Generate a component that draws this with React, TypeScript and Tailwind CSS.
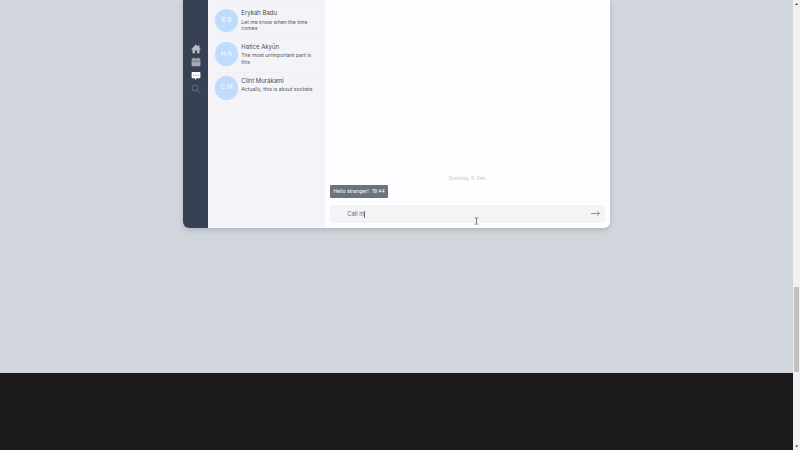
import React from "react";

type Contact = { initials: string; name: string; lines: string[] };

const contacts: Contact[] = [
  { initials: "E B", name: "Erykah Badu", lines: ["Let me know when the time", "comes"] },
  { initials: "H A", name: "Hatice Akyün", lines: ["The most unimportant part is", "this"] },
  { initials: "C M", name: "Clint Murakami", lines: ["Actually, this is about sockets"] },
];

function HomeIcon() {
  return (
    <svg viewBox="0 0 10 10" className="size-2.5 fill-[#b9bcc5]">
      <path d="M5 .6 .3 5l.7.7.5-.4v4h2.5V6.4h2v2.9h2.5v-4l.5.4.7-.7-1.3-1.2V1.3H7v1.1z" />
    </svg>
  );
}

function CalendarIcon() {
  return (
    <svg viewBox="0 0 10 10" className="size-2.5">
      <path fill="#a7abb5" d="M2 .8h1.2v.8h3.6V.8H8v.8h.5q.9 0 .9.9v1.2H.6V2.5q0-.9.9-.9H2zM.6 4.2h8.8v4.2q0 .9-.9.9h-7q-.9 0-.9-.9z" />
      <path fill="#777d8b" d="M2.2 5.2h1V6h-1zM4.5 5.2h1V6h-1zM6.8 5.2h1V6h-1z" />
    </svg>
  );
}

function ChatIcon() {
  return (
    <svg viewBox="0 0 10 10" className="size-2.5">
      <path fill="#fff" d="M1.4 1h7.2q.8 0 .8.8v4.6q0 .8-.8.8H5.7L4 9.1V7.2H1.4q-.8 0-.8-.8V1.8q0-.8.8-.8" />
      <path fill="#626979" d="M2.2 3.7h1v1h-1zM4.5 3.7h1v1h-1zM6.8 3.7h1v1h-1z" />
    </svg>
  );
}

function SearchIcon() {
  return (
    <svg viewBox="0 0 10 10" className="size-2.5 fill-none stroke-[#7d828f]" strokeWidth="0.7">
      <circle cx="4.1" cy="4" r="3" />
      <path d="m6.3 6.2 3 3" />
    </svg>
  );
}

function ContactRow({ initials, name, lines }: Contact) {
  return (
    <div className="flex h-[33.7px] gap-[3px] border-t border-[#efeef3] pt-[3px]">
      <div className="flex size-[23.5px] shrink-0 items-center justify-center rounded-full bg-[#bfdbfe] pt-px text-[6.5px] font-medium text-[#f4f8ff]">
        {initials}
      </div>
      <div className="whitespace-nowrap pt-[0.5px]">
        <div className="text-[6px] leading-[8px] text-[#4b4b51]">{name}</div>
        <div className="pt-[1.5px] text-[5.1px] leading-[6.6px] text-[#58585e]">
          {lines.map((line) => (
            <div key={line}>{line}</div>
          ))}
        </div>
      </div>
    </div>
  );
}

function Scrollbar() {
  return (
    <div className="flex w-[7px] shrink-0 flex-col items-center bg-[#f1f1f1]">
      <svg viewBox="0 0 7 7" className="size-[7px] shrink-0">
        <path fill="#555" d="M2 5h3.4L3.7 3z" />
      </svg>
      <div className="mt-[280px] h-[85px] w-[5px] bg-[#c1c1c1]" />
      <div className="grow" />
      <svg viewBox="0 0 7 7" className="size-[7px] shrink-0">
        <path fill="#555" d="M2 2.5h3.4L3.7 4.5z" />
      </svg>
    </div>
  );
}

export default function App() {
  return (
    <div className="relative flex h-[450px] w-[800px] overflow-hidden bg-[#1b191c] font-['Inter',sans-serif]">
      <div className="flex grow flex-col">
        <main className="h-[373px] bg-[#d1d5dc] pl-[183.3px]">
          <div className="flex h-[228px] w-[426.7px] overflow-hidden rounded-b-[6px] bg-[#fefdff] shadow-[0_2px_5px_rgba(60,65,80,0.22)]">
            <nav className="flex w-[25px] shrink-0 flex-col items-center gap-[3.4px] bg-[#374054] pt-[44px]">
              <HomeIcon />
              <CalendarIcon />
              <ChatIcon />
              <SearchIcon />
            </nav>
            <aside className="w-[117px] shrink-0 bg-[#f4f3f8] pl-[6.5px] pr-[2px] pt-[4.7px]">
              {contacts.map((contact) => (
                <ContactRow key={contact.name} {...contact} />
              ))}
            </aside>
            <section className="flex grow flex-col px-[5px] pb-[5px]">
              <div className="mt-[174px] text-center text-[5px] leading-[8px] text-[#c9c9ce]">Sonntag, 6. Feb.</div>
              <div className="mt-[2.5px] flex h-[13.5px] w-[58px] items-center gap-[3px] whitespace-nowrap rounded-[1px] bg-[#6b7280] pl-[3px] pt-px text-[5.1px] text-white">
                <span>Hello stranger!</span>
                <span>19:44</span>
              </div>
              <div className="mt-[7px] flex h-[18px] items-center justify-between rounded-[3px] bg-[#f4f3f6] pl-[17px] pr-[5px]">
                <div className="flex items-center text-[5.8px] text-[#68686e]">
                  <span>Call m</span>
                  <span className="h-[7px] w-[0.7px] bg-[#77777c]" />
                </div>
                <svg viewBox="0 0 9 7" className="mb-px h-[7px] w-[9px] fill-none stroke-[#77777b]" strokeWidth="0.8">
                  <path d="M0 3.5h8.3M6.1 1.2l2.3 2.3-2.3 2.3" />
                </svg>
              </div>
            </section>
          </div>
        </main>
        <footer className="grow bg-[#1b191c]" />
      </div>
      <Scrollbar />
      <svg viewBox="0 0 5 8" className="absolute left-[473.5px] top-[217px] h-[8px] w-[5px] fill-none stroke-[#66666b]" strokeWidth="0.8">
        <path d="M.7.8h1.1q.7 0 .7.7 0-.7.7-.7h1.1M2.5 1.5v5M.7 7.2h1.1q.7 0 .7-.7 0 .7.7.7h1.1" />
      </svg>
    </div>
  );
}
